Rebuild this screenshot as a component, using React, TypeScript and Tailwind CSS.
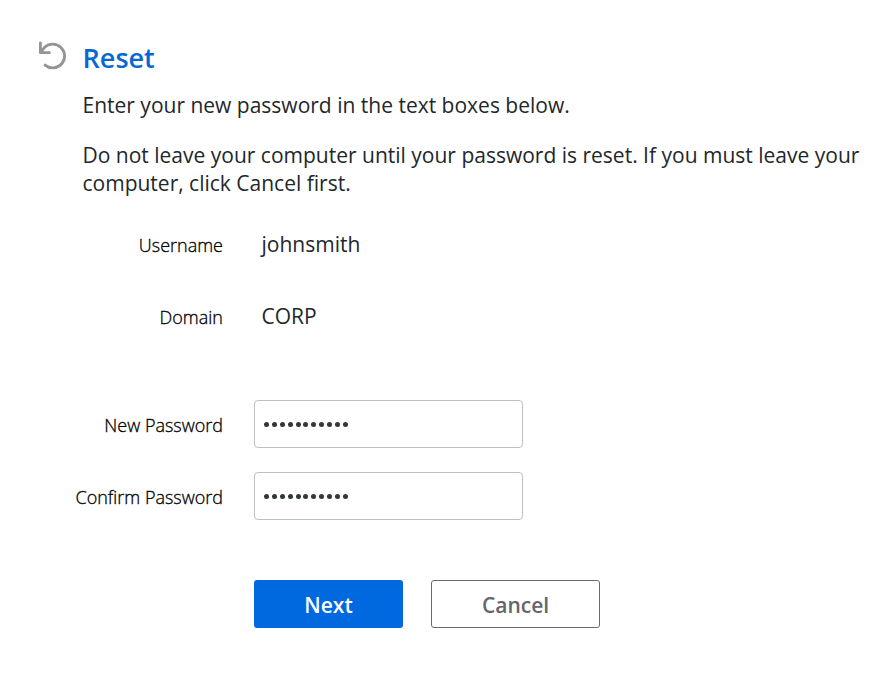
import React from 'react';

const labelClass = 'w-[223px] shrink-0 text-right text-[18px] leading-6 font-light whitespace-nowrap text-black [-webkit-text-stroke:0.3px_#000]';

function Info({ label, value }: { label: string; value: string }) {
  return (
    <div className="flex h-[72px] items-start">
      <div className={labelClass}>{label}</div>
      <div className="ml-[38.5px] text-[21px] leading-[22px]">{value}</div>
    </div>
  );
}

function Field({ label }: { label: string }) {
  return (
    <div className="flex h-12 items-center">
      <label className={`${labelClass} pt-0.5`}>{label}</label>
      <div className="ml-[31px] flex h-12 w-[269px] items-center gap-[2.9px] rounded-[4px] border border-[#bdbfc2] pl-[9px]">
        {Array.from({ length: 11 }, (_, i) => (
          <span key={i} className="size-[5px] rounded-full bg-[#333639]" />
        ))}
      </div>
    </div>
  );
}

export default function App() {
  return (
    <main className="h-[685px] w-[892px] overflow-hidden bg-white pt-10 font-['Open_Sans',sans-serif] text-[#22272b]">
      <header className="flex h-9 items-start">
        <svg className="ml-[38px] h-[30px] w-[30px] shrink-0" viewBox="0 0 30 30" fill="none" stroke="#919499" strokeWidth="2.8" strokeLinecap="round" strokeLinejoin="round">
          <path d="M2.4 3V12.7H11.4M2.6 12.4L6.3 7.6A11.9 11.9 0 1 1 7 25.1" />
        </svg>
        <h1 className="ml-[14.6px] text-[27px] leading-[35px] font-semibold text-[#0768d3]">Reset</h1>
      </header>
      <section className="ml-[82.5px] pt-[15px] text-[21px] leading-7">
        <p>Enter your new password in the text boxes below.</p>
        <p className="mt-[22px]">Do not leave your computer until your password is reset. If you must leave your<br />computer, click Cancel first.</p>
      </section>
      <section className="mt-9">
        <Info label="Username" value="johnsmith" />
        <Info label="Domain" value="CORP" />
      </section>
      <section className="mt-[23px] flex flex-col gap-6">
        <Field label="New Password" />
        <Field label="Confirm Password" />
      </section>
      <div className="mt-[60px] ml-[254px] flex gap-7 text-[21px] font-semibold">
        <button className="h-12 w-[149px] rounded-[3px] bg-[#0069df] pt-[3px] text-white">Next</button>
        <button className="h-12 w-[169px] rounded-[3px] border border-[#666b70] pt-[3px] text-[#62676c]">Cancel</button>
      </div>
    </main>
  );
}
